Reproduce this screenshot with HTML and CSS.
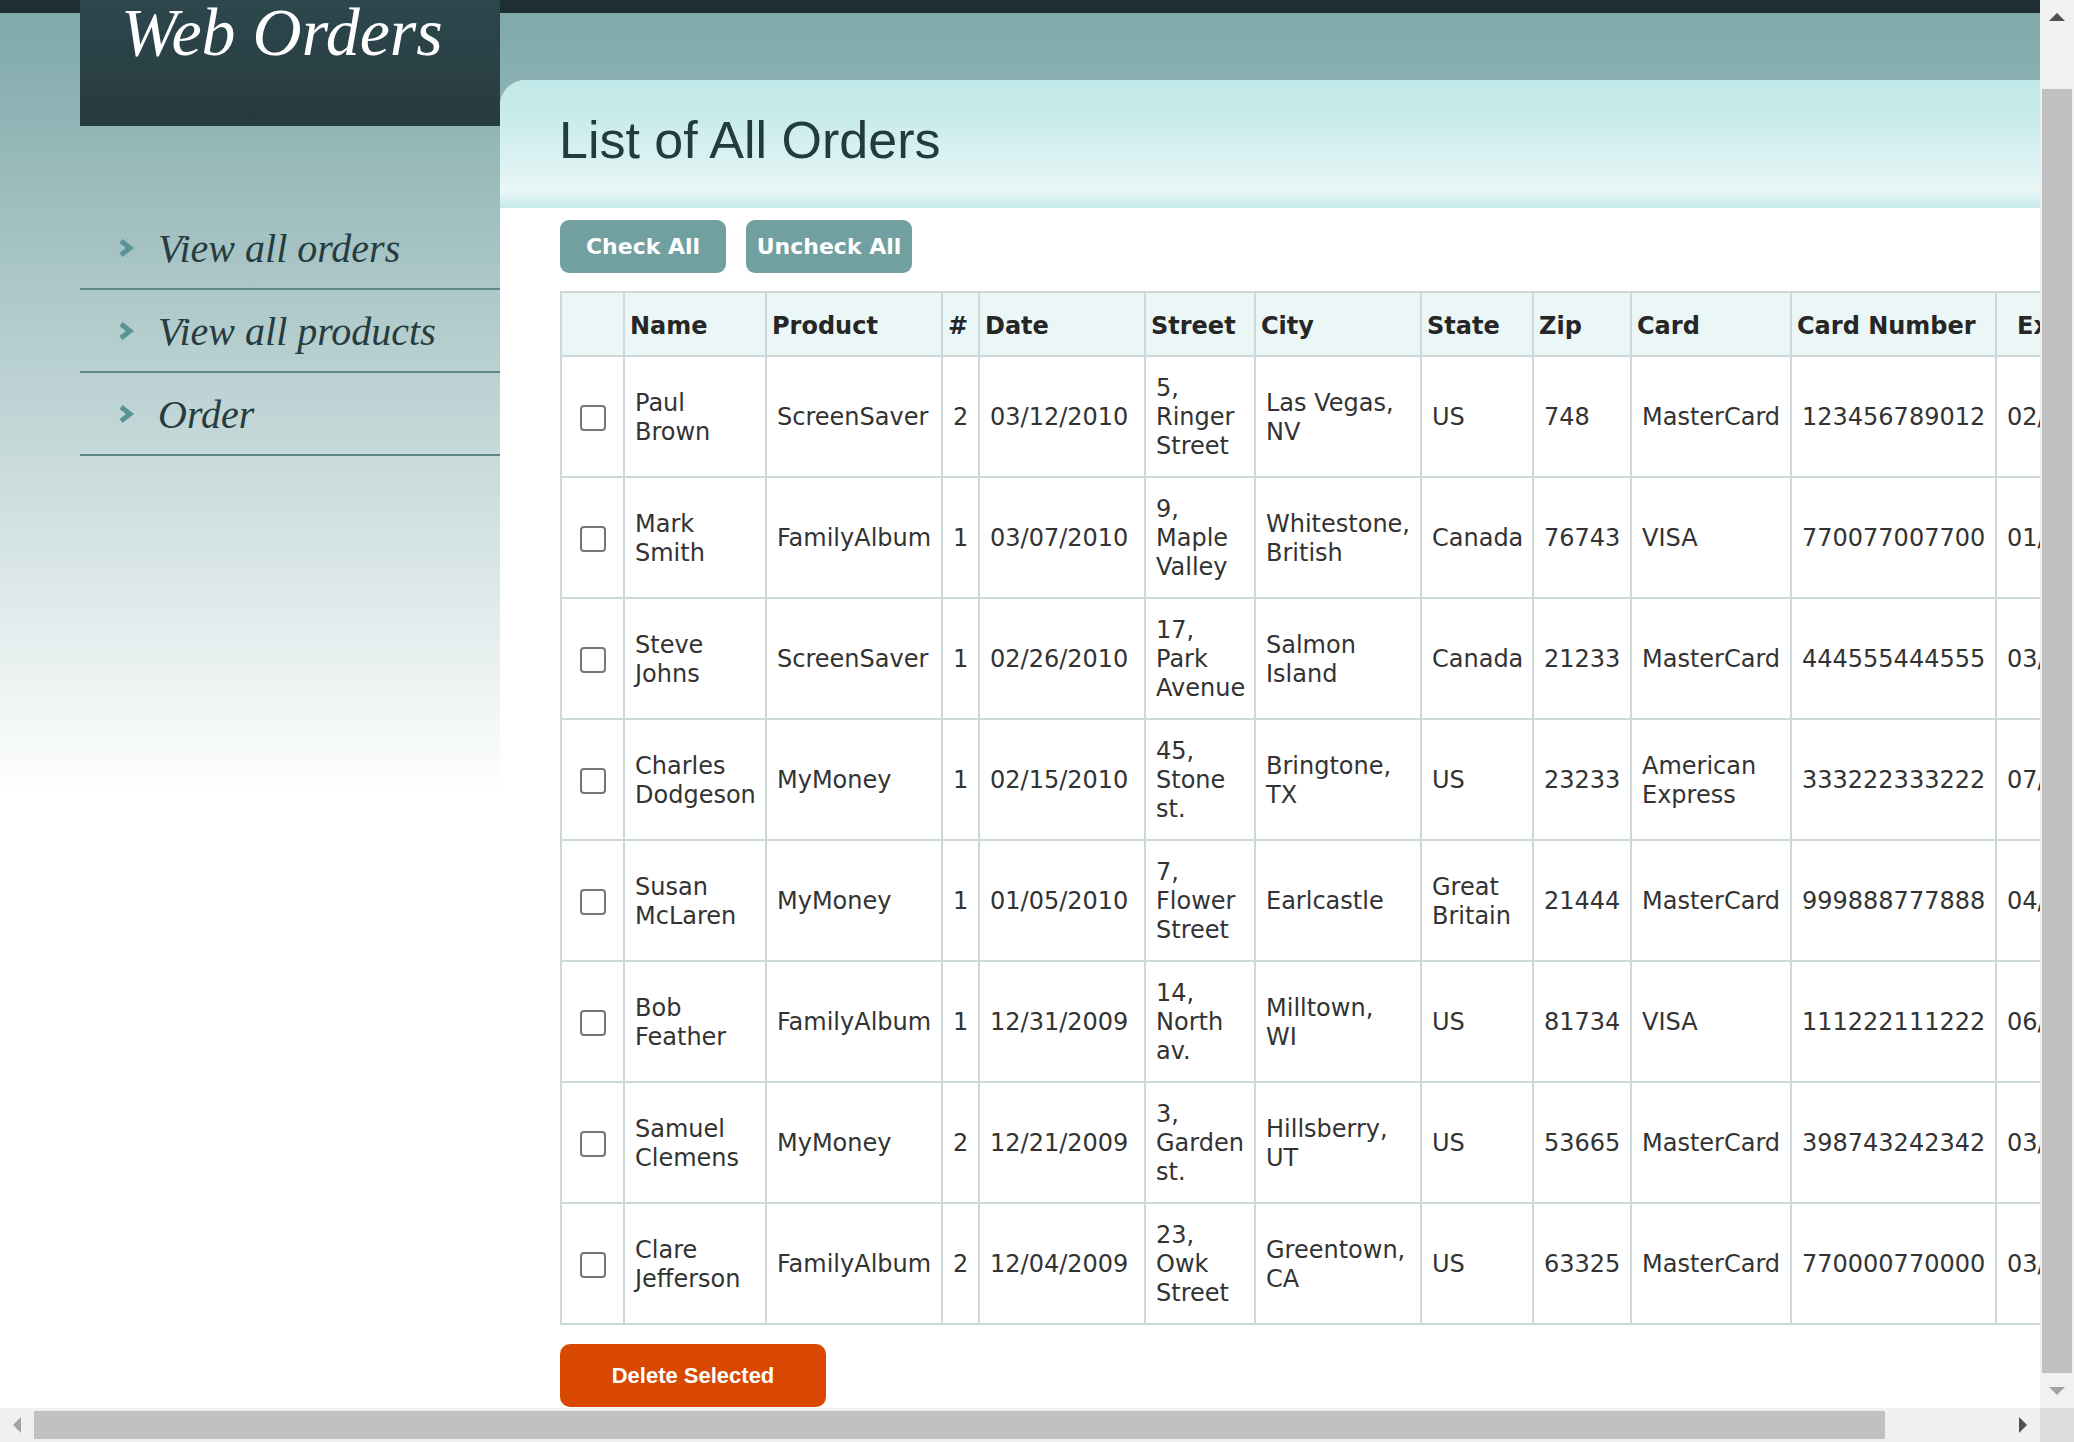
FILE: index.html
```html
<!DOCTYPE html>
<html lang="en">
<head>
<meta charset="utf-8">
<title>Web Orders</title>
<link rel="stylesheet" href="styles.css">
</head>
<body>
<div class="window">
  <div class="viewport">
    <div class="page">
      <aside class="sidebar">
        <div class="brand">Web Orders</div>
        <ul class="nav">
          <li class="nav-item"><svg class="chev" viewBox="0 0 16 18" width="16" height="18"><polyline points="3,2 12,9 3,16" /></svg><span>View all orders</span></li>
          <li class="nav-item"><svg class="chev" viewBox="0 0 16 18" width="16" height="18"><polyline points="3,2 12,9 3,16" /></svg><span>View all products</span></li>
          <li class="nav-item"><svg class="chev" viewBox="0 0 16 18" width="16" height="18"><polyline points="3,2 12,9 3,16" /></svg><span>Order</span></li>
        </ul>
      </aside>
      <main class="panel">
        <div class="panel-head"><h1 class="title">List of All Orders</h1></div>
        <div class="panel-body">
          <div class="toolbar">
            <button class="btn-teal">Check All</button>
            <button class="btn-teal">Uncheck All</button>
          </div>
          <table class="orders">
            <thead>
              <tr>
                <th class="c-cb"></th>
                <th class="c-name">Name</th>
                <th class="c-prod">Product</th>
                <th class="c-num">#</th>
                <th class="c-date">Date</th>
                <th class="c-street">Street</th>
                <th class="c-city">City</th>
                <th class="c-state">State</th>
                <th class="c-zip">Zip</th>
                <th class="c-card">Card</th>
                <th class="c-cardno">Card Number</th>
                <th class="c-exp">Exp</th>
                <th class="c-edit"></th>
              </tr>
            </thead>
            <tbody>
              <tr><td><input type="checkbox" class="cb"></td><td>Paul Brown</td><td>ScreenSaver</td><td>2</td><td>03/12/2010</td><td>5, Ringer Street</td><td>Las Vegas, NV</td><td>US</td><td>748</td><td>MasterCard</td><td>123456789012</td><td>02/12</td><td></td></tr>
              <tr><td><input type="checkbox" class="cb"></td><td>Mark Smith</td><td>FamilyAlbum</td><td>1</td><td>03/07/2010</td><td>9, Maple Valley</td><td>Whitestone, British</td><td>Canada</td><td>76743</td><td>VISA</td><td>770077007700</td><td>01/11</td><td></td></tr>
              <tr><td><input type="checkbox" class="cb"></td><td>Steve Johns</td><td>ScreenSaver</td><td>1</td><td>02/26/2010</td><td>17, Park Avenue</td><td>Salmon Island</td><td>Canada</td><td>21233</td><td>MasterCard</td><td>444555444555</td><td>03/13</td><td></td></tr>
              <tr><td><input type="checkbox" class="cb"></td><td>Charles Dodgeson</td><td>MyMoney</td><td>1</td><td>02/15/2010</td><td>45, Stone st.</td><td>Bringtone, TX</td><td>US</td><td>23233</td><td>American Express</td><td>333222333222</td><td>07/11</td><td></td></tr>
              <tr><td><input type="checkbox" class="cb"></td><td>Susan McLaren</td><td>MyMoney</td><td>1</td><td>01/05/2010</td><td>7, Flower Street</td><td>Earlcastle</td><td>Great Britain</td><td>21444</td><td>MasterCard</td><td>999888777888</td><td>04/10</td><td></td></tr>
              <tr><td><input type="checkbox" class="cb"></td><td>Bob Feather</td><td>FamilyAlbum</td><td>1</td><td>12/31/2009</td><td>14, North av.</td><td>Milltown, WI</td><td>US</td><td>81734</td><td>VISA</td><td>111222111222</td><td>06/12</td><td></td></tr>
              <tr><td><input type="checkbox" class="cb"></td><td>Samuel Clemens</td><td>MyMoney</td><td>2</td><td>12/21/2009</td><td>3, Garden st.</td><td>Hillsberry, UT</td><td>US</td><td>53665</td><td>MasterCard</td><td>398743242342</td><td>03/11</td><td></td></tr>
              <tr><td><input type="checkbox" class="cb"></td><td>Clare Jefferson</td><td>FamilyAlbum</td><td>2</td><td>12/04/2009</td><td>23, Owk Street</td><td>Greentown, CA</td><td>US</td><td>63325</td><td>MasterCard</td><td>770000770000</td><td>03/12</td><td></td></tr>
            </tbody>
          </table>
          <button class="btn-delete">Delete Selected</button>
        </div>
      </main>
    </div>
  </div>
  <div class="vscroll">
    <div class="sb-btn"><span class="tri-up"></span></div>
    <div class="vthumb"></div>
    <div class="sb-fill"></div>
    <div class="sb-btn"><span class="tri-down"></span></div>
  </div>
  <div class="hscroll">
    <div class="sb-btn"><span class="tri-left"></span></div>
    <div class="hthumb"></div>
    <div class="sb-fill"></div>
    <div class="sb-btn"><span class="tri-right"></span></div>
  </div>
  <div class="corner"></div>
</div>
</body>
</html>
```

FILE: styles.css
```css
html, body {
  margin: 0;
  padding: 0;
  overflow: hidden;
  background: #ffffff;
}

.window {
  display: grid;
  grid-template-columns: 2040px 34px;
  grid-template-rows: 1408px 34px;
  width: 2074px;
  height: 1442px;
}

.viewport {
  overflow: hidden;
  background: #ffffff linear-gradient(to bottom, #1e2e33 0, #1e2e33 13px, #7fa9aa 13px, #ffffff 795px) no-repeat;
}

.page {
  display: flex;
  align-items: flex-start;
  padding-left: 80px;
}

/* ---------- sidebar ---------- */
.sidebar {
  flex: 0 0 420px;
  width: 420px;
}

.brand {
  height: 126px;
  box-sizing: border-box;
  padding: 0 0 0 41px;
  background: linear-gradient(to bottom, #2c474c 0, #293f44 70%, #243a3e 100%);
  color: #ffffff;
  font-family: "Liberation Serif", "Times New Roman", serif;
  font-style: italic;
  font-size: 68px;
  line-height: 64px;
  white-space: nowrap;
}

.nav {
  list-style: none;
  margin: 81px 0 0 0;
  padding: 0;
}

.nav-item {
  display: flex;
  align-items: center;
  gap: 24px;
  height: 81px;
  padding-left: 38px;
  border-bottom: 2px solid #618688;
  font-family: "Liberation Serif", "Times New Roman", serif;
  font-style: italic;
  font-size: 40px;
  line-height: 44px;
  color: #263c3f;
  white-space: nowrap;
}

.nav-item span {
  padding-top: 2px;
}

.chev {
  flex: none;
  display: block;
}

.chev polyline {
  fill: none;
  stroke: #5a9497;
  stroke-width: 5;
  stroke-linejoin: miter;
}

/* ---------- main panel ---------- */
.panel {
  flex: 1 0 auto;
  margin-top: 80px;
  background: #ffffff;
  border-top-left-radius: 26px;
  min-height: 1328px;
}

.panel-head {
  height: 128px;
  box-sizing: border-box;
  padding: 32px 0 0 59px;
  border-top-left-radius: 26px;
  background: linear-gradient(to bottom, #c2e9e9 0, #c5eaea 22%, #e3f4f4 78%, #eaf6f6 86%, #c7eaea 100%);
}

.title {
  margin: 0;
  font-family: "Liberation Sans", Arial, sans-serif;
  font-weight: normal;
  font-size: 52px;
  line-height: 57px;
  color: #233a3e;
  white-space: nowrap;
}

.panel-body {
  padding: 12px 60px 0 60px;
  font-family: "DejaVu Sans", Verdana, sans-serif;
}

.toolbar {
  display: flex;
  gap: 20px;
}

.btn-teal {
  width: 166px;
  height: 53px;
  padding: 0;
  border: none;
  border-radius: 9px;
  background: #72a0a0;
  color: #ffffff;
  font-family: "DejaVu Sans", Verdana, sans-serif;
  font-weight: bold;
  font-size: 22px;
  white-space: nowrap;
}

/* ---------- table ---------- */
.orders {
  margin-top: 18px;
  table-layout: fixed;
  width: 1581px;
  border-collapse: separate;
  border-spacing: 0;
  border-top: 2px solid #cdd8d9;
  border-left: 2px solid #cdd8d9;
  font-size: 24px;
  line-height: 29px;
  color: #333333;
}

.orders th,
.orders td {
  box-sizing: border-box;
  border-right: 2px solid #cdd8d9;
  border-bottom: 2px solid #cdd8d9;
  text-align: left;
  vertical-align: middle;
}

.orders th {
  padding: 19px 5px 14px 5px;
  background: #ebf7f7;
  font-weight: bold;
  color: #262626;
  white-space: nowrap;
  overflow: hidden;
}

.orders td {
  padding: 17px 10px 15px 10px;
}

.c-cb { width: 63px; }
.c-name { width: 142px; }
.c-prod { width: 176px; }
.c-num { width: 37px; }
.c-date { width: 166px; }
.c-street { width: 110px; }
.c-city { width: 166px; }
.c-state { width: 112px; }
.c-zip { width: 98px; }
.c-card { width: 160px; }
.c-cardno { width: 205px; }
.orders th.c-exp { width: 94px; padding-left: 20px; }
.c-edit { width: 50px; }

.cb {
  -webkit-appearance: none;
  appearance: none;
  display: inline-block;
  vertical-align: middle;
  box-sizing: border-box;
  width: 26px;
  height: 26px;
  margin: 0 6px 0 8px;
  border: 2px solid #767676;
  border-radius: 4px;
  background: #ffffff;
}

.btn-delete {
  display: block;
  margin-top: 19px;
  width: 266px;
  height: 63px;
  padding: 0;
  border: none;
  border-radius: 10px;
  background: #d84800;
  color: #ffffff;
  font-family: "Liberation Sans", Arial, sans-serif;
  font-weight: bold;
  font-size: 22px;
  white-space: nowrap;
}

/* ---------- scrollbars ---------- */
.vscroll {
  display: flex;
  flex-direction: column;
  background: #f1f1f1;
}

.hscroll {
  display: flex;
  flex-direction: row;
  background: #f0f0f0;
}

.sb-btn {
  flex: 0 0 34px;
  width: 34px;
  height: 34px;
  display: flex;
  align-items: center;
  justify-content: center;
}

.sb-fill {
  flex: 1 1 auto;
}

.vthumb {
  flex: 0 0 1284px;
  margin: 55px 2px 0 2px;
  background: #c1c1c1;
}

.hthumb {
  flex: 0 0 1851px;
  margin: 3px 0;
  background: #c1c1c1;
}

.corner {
  background: #dcdcdc;
}

.tri-up {
  width: 0;
  height: 0;
  border-left: 8px solid transparent;
  border-right: 8px solid transparent;
  border-bottom: 8px solid #505050;
}

.tri-down {
  width: 0;
  height: 0;
  border-left: 8px solid transparent;
  border-right: 8px solid transparent;
  border-top: 8px solid #a3a3a3;
}

.tri-left {
  width: 0;
  height: 0;
  border-top: 8px solid transparent;
  border-bottom: 8px solid transparent;
  border-right: 8px solid #a3a3a3;
}

.tri-right {
  width: 0;
  height: 0;
  border-top: 8px solid transparent;
  border-bottom: 8px solid transparent;
  border-left: 8px solid #505050;
}
```
